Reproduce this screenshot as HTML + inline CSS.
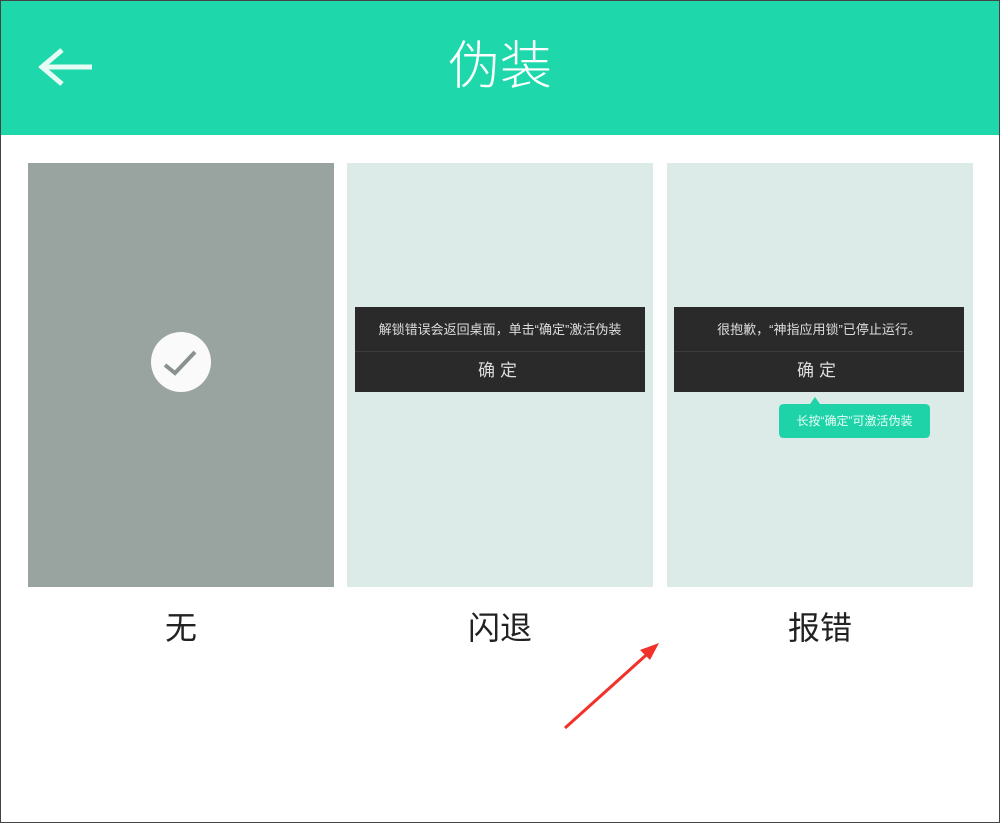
<!DOCTYPE html>
<html><head><meta charset="utf-8"><style>
*{margin:0;padding:0;box-sizing:border-box}
body{width:1000px;height:823px;background:#fff;position:relative;overflow:hidden;font-family:"Liberation Sans","Noto Sans CJK SC",sans-serif}
.frame{position:absolute;left:0;top:0;width:1000px;height:823px;border:1px solid #444;pointer-events:none}
.hdr{position:absolute;left:0;top:0;width:1000px;height:135px;background:#1ed8ac}
.title{position:absolute;left:0;width:1000px;top:34px;text-align:center;color:#fff;font-size:52px;line-height:66px;font-weight:300}
.card{position:absolute;top:163px;height:424px;width:306px}
.dlg{position:absolute;top:307px;height:85px;width:290px;background:#2a2a2a;color:#ddd;text-align:center}
.dlg .t{height:45px;line-height:45px;font-size:13px;border-bottom:1px solid #3d3d3d}
.dlg .b{height:40px;line-height:38px;font-size:17px;letter-spacing:5px}
.lbl{position:absolute;top:606px;font-size:32px;line-height:44px;color:#222;text-align:center;width:306px}
</style></head><body>
<div class="hdr">
<svg style="position:absolute;left:36px;top:46px" width="60" height="44"><path d="M6 21 H56 M26 4 L6 21 L26 38" stroke="#e6fbf4" stroke-width="5" fill="none"/></svg>
<div class="title">伪装</div>
</div>
<div class="card" style="left:28px;background:#99a39f"></div>
<svg style="position:absolute;left:151px;top:332px" width="60" height="60"><circle cx="30" cy="30" r="30" fill="#fafafa"/><path d="M14 33 L24 41 L44 20" stroke="#8a928f" stroke-width="4" fill="none"/></svg>
<div class="card" style="left:347px;background:#dcebe7"></div>
<div class="card" style="left:667px;background:#dcebe7"></div>
<div class="dlg" style="left:355px"><div class="t">解锁错误会返回桌面，单击“确定”激活伪装</div><div class="b">确定</div></div>
<div class="dlg" style="left:674px"><div class="t">很抱歉，“神指应用锁”已停止运行。</div><div class="b">确定</div></div>
<svg style="position:absolute;left:778px;top:395px" width="153" height="44"><path d="M6 9 H32 L37 2 L42 9 H147 Q152 9 152 14 V38 Q152 43 147 43 H6 Q1 43 1 38 V14 Q1 9 6 9Z" fill="#1ed3a8"/></svg>
<div style="position:absolute;left:778px;top:404px;width:153px;height:34px;line-height:34px;text-align:center;color:#e8fff8;font-size:12px">长按“确定”可激活伪装</div>
<div class="lbl" style="left:28px">无</div>
<div class="lbl" style="left:347px">闪退</div>
<div class="lbl" style="left:667px">报错</div>
<svg style="position:absolute;left:0;top:0" width="1000" height="823"><path d="M565 728 L654 648" stroke="#f0322a" stroke-width="3"/><path d="M659 643 L640 650 L650 660Z" fill="#f0322a"/></svg>
<div class="frame"></div>
</body></html>
